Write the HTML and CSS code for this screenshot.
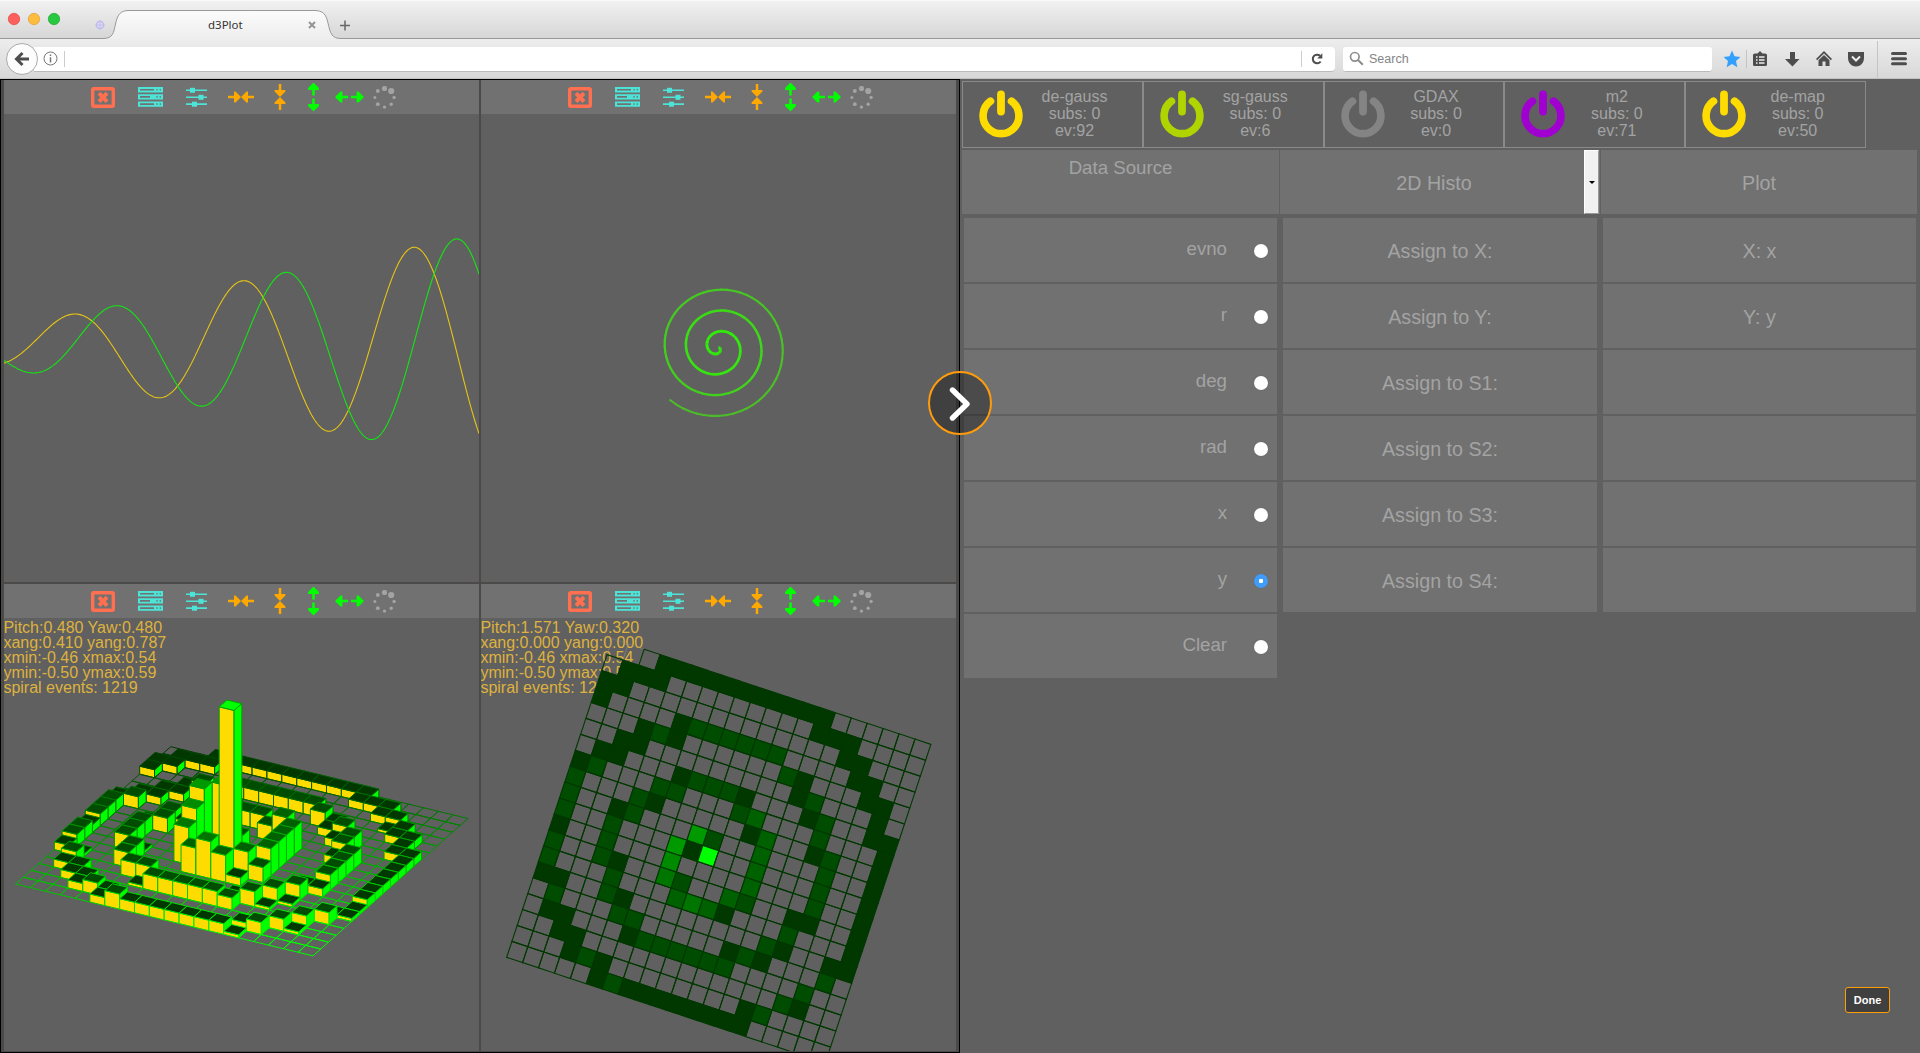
FILE: index.html
```html
<!DOCTYPE html>
<html lang="en">
<head>
<meta charset="utf-8">
<title>d3Plot</title>
<link rel="stylesheet" href="styles.css">
</head>
<body>
<svg class="defs" width="0" height="0">
  <symbol id="i-close" viewBox="0 0 24 21"><rect x="1.7" y="1.7" width="20.6" height="17.6" rx="1" fill="none" stroke="#ff6f50" stroke-width="3.4"/><path d="M8 6.200l8 8.400M16 6.200l-8 8.400" stroke="#ff6f50" stroke-width="4"/></symbol>
  <symbol id="i-list" viewBox="0 0 25 20"><g fill="#4de4d8"><path d="M0 0h25v5.400H0zM0 7.200h25v5.400H0zM0 14.400h25v5.400H0z"/></g><g fill="#717171"><path d="M2 1.900h14v1.600H2zM2 9.100h10v1.600H2zM2 16.300h14v1.600H2z"/><circle cx="19" cy="2.700" r=".8"/><circle cx="22.300" cy="2.700" r=".8"/><circle cx="19" cy="9.900" r=".8"/><circle cx="22.300" cy="9.900" r=".8"/><circle cx="19" cy="17.100" r=".8"/><circle cx="22.300" cy="17.100" r=".8"/></g></symbol>
  <symbol id="i-sliders" viewBox="0 0 21 20"><g fill="#4de4d8"><path d="M0 2.500h21v1.600H0zM0 9.500h21v1.600H0zM0 16.300h21v1.600H0z"/><rect x="4" y=".8" width="5" height="5"/><rect x="12.500" y="7.800" width="5" height="5"/><rect x="6" y="14.700" width="5" height="5"/></g></symbol>
  <symbol id="i-in" viewBox="0 0 26 12"><g fill="none" stroke-width="2.500"><path d="M0 6h11M26 6H15"/></g><path d="M6 .6h1.500L13 6 7.500 11.400H6V.6zM20 .6h-1.500L13 6l5.500 5.400H20z" stroke="none" fill="currentColor"/></symbol>
  <symbol id="i-out" viewBox="0 0 29 12"><path d="M4 6h9M16 6h9" stroke-width="2.600"/><path d="M0 6L5.500.6h1.900v10.800H5.500zM29 6L23.500.6h-1.900v10.800h1.900z" stroke="none" fill="currentColor"/></symbol>
  <symbol id="i-spin" viewBox="-11.500 -11.500 23 23"><g fill="#a3a3a3"><circle cx="0" cy="-9" r="2.600"/><circle cx="6.700" cy="-6.500" r="3.100"/><circle cx="9.600" cy="0" r="1.700"/><circle cx="6.700" cy="6.700" r="1.700"/><circle cx="0" cy="9.600" r="1.700"/><circle cx="-6.700" cy="6.700" r="1.900"/><circle cx="-9.600" cy="0" r="1.500"/><circle cx="-6.700" cy="-6.500" r="2"/></g></symbol>
  <symbol id="i-power" viewBox="0 0 44 48"><g fill="none" stroke="currentColor" stroke-linecap="round"><path d="M11.500 11.200A17.900 17.900 0 1 0 32.500 11.200" stroke-width="7.600"/><path d="M22 4.500v17" stroke-width="7.800"/></g></symbol>
</svg>

<header class="chrome">
  <div class="tabstrip">
    <svg class="tabshape" width="1920" height="40" viewBox="0 0 1920 40">
      <defs><linearGradient id="tg" x1="0" y1="0" x2="0" y2="1"><stop offset="0" stop-color="#fbfbfb"/><stop offset="1" stop-color="#ededed"/></linearGradient></defs>
      <path d="M0 38.500H103C113 38.500 113.500 33 115.500 24 117.500 15 120 10.500 129 10.500H314C323 10.500 326 14 328 23 330.500 34 332 38.500 341 38.500H1920V41H0z" fill="url(#tg)" stroke="#999"/>
      <circle cx="14" cy="19" r="5.700" fill="#fc605c" stroke="#df4744" stroke-width=".7"/><circle cx="34" cy="19" r="5.700" fill="#fdbc40" stroke="#de9f34" stroke-width=".7"/><circle cx="54" cy="19" r="5.700" fill="#28c840" stroke="#24a82f" stroke-width=".7"/>
      <circle cx="100" cy="25" r="3.600" fill="none" stroke="#c0bcf3" stroke-width="1.600"/><path d="M100 20.500v9M95.500 25h9" stroke="#c0bcf3"/>
      <path d="M309 22l6 6M315 22l-6 6" stroke="#949494" stroke-width="2"/>
      <path d="M345 20.500v10M340 25.500h10" stroke="#666" stroke-width="1.500"/>
    </svg>
    <span class="tabname">d3Plot</span>
  </div>
  <nav class="navbar">
    <div class="back"><svg width="16" height="16" viewBox="0 0 16 16"><path d="M15 8H4M8.500 2L2.500 8l6 6" fill="none" stroke="#4d4d4d" stroke-width="3"/></svg></div>
    <div class="url">
      <svg width="15" height="15" viewBox="0 0 15 15"><circle cx="7.500" cy="7.500" r="6.500" fill="none" stroke="#777"/><path d="M7.500 6.200v5.200M7.500 3.500v1.600" stroke="#777" stroke-width="1.500"/></svg>
      <i class="sep"></i><span class="grow"></span><i class="sep"></i>
      <svg class="reload" width="12" height="12" viewBox="0 0 12 12"><path d="M9.600 8.500A4.300 4.300 0 1 1 9 2.800" fill="none" stroke="#4d4d4d" stroke-width="2"/><path d="M11.300.3v5.200H6.200z" fill="#4d4d4d"/></svg>
    </div>
    <div class="search"><svg width="15" height="15" viewBox="0 0 15 15"><circle cx="5.800" cy="5.800" r="4.300" fill="none" stroke="#8d8d8d" stroke-width="1.700"/><path d="M9 9l4.800 4.800" stroke="#8d8d8d" stroke-width="2"/></svg><span>Search</span></div>
    <svg class="tools" width="200" height="40" viewBox="1716 39 200 40">
      <path d="M1732 50.500l2.500 5.700 6 .7-4.500 4.100 1.300 6.300-5.300-3.200-5.300 3.200 1.300-6.300-4.500-4.100 6-.7z" fill="#33a0ff"/>
      <path d="M1746.500 50v18M1877.500 41v37" stroke="#c4c4c4"/>
      <g fill="#4d4d4d"><path d="M1755 53.500h2.500l2.500-2.500 2.500 2.500h2.500q2 0 2 1.500v9.500q0 1.500-1.500 1.500h-11q-1.500 0-1.500-1.500V55q0-1.500 2-1.500z"/><path d="M1790 52h5v7h4.500l-7 7.500-7.500-7.500h5z"/><path d="M1824 51l8 8-1.200 1.200-6.800-6.800-6.800 6.800L1816 59z"/><path d="M1818.500 60.300l5.500-5.400 5.500 5.400V66h-4v-4.500h-3V66h-4z"/><path d="M1848 52h16v6c0 5-4 8.500-8 8.500s-8-3.500-8-8.500z"/></g>
      <path d="M1756 57h1.500m1.500 0h5.500m-8.500 3h1.500m1.500 0h5.500m-8.500 3h1.500m1.500 0h5.500" stroke="#eee" stroke-width="1.300"/>
      <path d="M1852 56.500l4 4 4-4" fill="none" stroke="#eee" stroke-width="2"/>
      <path d="M1892.500 53.500h13M1892.500 58.700h13M1892.500 63.800h13" stroke="#4d4d4d" stroke-width="3" stroke-linecap="round"/>
    </svg>
  </nav>
</header>

<main class="app">
  <section class="plots">
    <article class="panel"><div class="bar"></div><svg class="plot" id="waves"></svg></article>
    <article class="panel"><div class="bar"></div><svg class="plot" id="spiral"></svg></article>
    <article class="panel"><div class="bar"></div><svg class="plot" id="bars3d"><text x="-.6" y="15.300">Pitch:0.480 Yaw:0.480</text><text x="-.6" y="30.300">xang:0.410 yang:0.787</text><text x="-.6" y="45.300">xmin:-0.46 xmax:0.54</text><text x="-.6" y="60.300">ymin:-0.50 ymax:0.59</text><text x="-.6" y="75.300">spiral events: 1219</text></svg></article>
    <article class="panel"><div class="bar"></div><svg class="plot" id="heat"><text x="-.6" y="15.300">Pitch:1.571 Yaw:0.320</text><text x="-.6" y="30.300">xang:0.000 yang:0.000</text><text x="-.6" y="45.300">xmin:-0.46 xmax:0.54</text><text x="-.6" y="60.300">ymin:-0.50 ymax:0.59</text><text x="-.6" y="75.300">spiral events: 1219</text></svg></article>
  </section>

  <section class="config">
    <div class="sources">
      <div class="source"><svg class="power yellow"><use href="#i-power"/></svg><p>de-gauss<br>subs: 0<br>ev:92</p></div>
      <div class="source"><svg class="power lime"><use href="#i-power"/></svg><p>sg-gauss<br>subs: 0<br>ev:6</p></div>
      <div class="source"><svg class="power gray"><use href="#i-power"/></svg><p>GDAX<br>subs: 0<br>ev:0</p></div>
      <div class="source"><svg class="power purple"><use href="#i-power"/></svg><p>m2<br>subs: 0<br>ev:71</p></div>
      <div class="source"><svg class="power yellow"><use href="#i-power"/></svg><p>de-map<br>subs: 0<br>ev:50</p></div>
    </div>
    <div class="heads">
      <div class="head first">Data Source</div>
      <div class="head kind"><span>2D Histo</span><b class="drop"></b></div>
      <div class="head">Plot</div>
    </div>
    <div class="columns">
      <div class="col fields">
        <label class="cell"><span>evno</span><i class="radio"></i></label>
        <label class="cell"><span>r</span><i class="radio"></i></label>
        <label class="cell"><span>deg</span><i class="radio"></i></label>
        <label class="cell"><span>rad</span><i class="radio"></i></label>
        <label class="cell"><span>x</span><i class="radio"></i></label>
        <label class="cell"><span>y</span><i class="radio on"></i></label>
        <label class="cell"><span>Clear</span><i class="radio"></i></label>
      </div>
      <div class="col">
        <div class="cell">Assign to X:</div><div class="cell">Assign to Y:</div><div class="cell">Assign to S1:</div><div class="cell">Assign to S2:</div><div class="cell">Assign to S3:</div><div class="cell">Assign to S4:</div>
      </div>
      <div class="col last">
        <div class="cell">X: x</div><div class="cell">Y: y</div><div class="cell"></div><div class="cell"></div><div class="cell"></div><div class="cell"></div>
      </div>
    </div>
    <button class="done">Done</button>
  </section>
  <div class="toggle"><svg width="64" height="64" viewBox="0 0 64 64"><path d="M24.500 19l14.500 14L24.500 47" fill="none" stroke="#fff" stroke-width="5.400" stroke-linecap="round" stroke-linejoin="round"/></svg></div>
</main>
<script src="plots.js"></script>
</body>
</html>
```
FILE: styles.css
```css
* { box-sizing: border-box; }
body { margin: 0; width: 1920px; height: 1053px; overflow: hidden; background: #606060; font-family: "Liberation Sans", Arial, sans-serif; color: #a3a3a3; }
svg { display: block; flex: none; }
.defs { position: absolute; }

.chrome { height: 79px; background: #d9d9d9; }
.tabstrip { position: relative; height: 39px; background: linear-gradient(#f1f1f1, #d6d6d6); border-top: 1px solid #fafafa; }
.tabshape { position: absolute; left: 0; top: -1px; }
.tabname { position: absolute; left: 208px; top: 17px; font: 11.5px/14px "Noto Sans", sans-serif; color: #333; }
.navbar { position: relative; height: 40px; display: flex; align-items: center; padding: 1px 0 0 6px; background: linear-gradient(#ededed, #d8d8d8); border-bottom: 1px solid #c3c3c3; }
.back { width: 32px; height: 32px; border-radius: 50%; border: 1px solid #aaa; background: #fcfcfc; display: flex; align-items: center; justify-content: center; z-index: 1; }
.url { width: 1301px; height: 25px; margin-left: -4px; background: #fff; border-bottom: 1px solid #bbb; border-radius: 0 4px 4px 0; display: flex; align-items: center; padding-left: 9px; }
.sep { width: 1px; height: 16px; margin-left: 6px; background: #ccc; }
.grow { flex: 1; }
.reload { margin: 0 12px 0 9px; }
.search { width: 369px; height: 25px; margin-left: 8px; background: #fff; border-bottom: 1px solid #bbb; border-radius: 3px; display: flex; align-items: center; padding-left: 6px; gap: 5px; font-size: 12.500px; color: #858585; }
.tools { margin-left: 4px; }

.app { position: relative; height: 974px; display: flex; }
.plots { width: 960px; height: 974px; display: grid; grid-template-columns: 475px 475px; grid-template-rows: 502px 467px; gap: 2px; padding: 0 3px; border: 1px solid #000; background: #4c4949; }
.panel { display: flex; flex-direction: column; min-height: 0; background: #606060; overflow: hidden; }
.bar { height: 34px; flex: none; display: flex; align-items: center; background: #717171; }
.orange { color: #ffa800; stroke: #ffa800; }
.green { color: #00ff00; stroke: #00ff00; }
.up { transform: rotate(90deg); }
.plot { width: 475px; flex: 1; min-height: 0; overflow: hidden; }
.plot text { font-size: 16px; fill: #deb23e; }

.config { width: 960px; padding: 2px 1px 0 2px; }
.sources { display: flex; height: 67px; }
.source { width: 180.800px; height: 67px; border: 1px solid #8a8a8a; display: flex; align-items: center; padding-left: 16px; }
.source p { margin: 0 0 2px 1px; width: 101px; text-align: center; font-size: 16px; line-height: 17px; }
.power { width: 44px; height: 48px; margin: 0 0 2px; }
.yellow { color: #ffdc00; } .lime { color: #b0d400; } .gray { color: #848484; } .purple { color: #a000d0; }
.heads { display: grid; grid-template-columns: 317px 320px 316px; gap: 1px; height: 64px; margin-top: 2px; font-size: 19.700px; }
.head { background: #717171; display: flex; align-items: center; justify-content: center; padding-top: 2px; }
.first { align-items: flex-start; padding-top: 7px; font-size: 18.670px; }
.kind { justify-content: stretch; padding-top: 0; }
.kind span { flex: 1; text-align: center; padding: 2px 0 0 4px; }
.drop { width: 15px; height: 64px; margin-right: 1px; background: #f1f1f1; border: 1px solid #fff; border-right-color: #999; border-bottom-color: #999; display: flex; align-items: center; justify-content: center; }
.drop::after { content: ""; border: 3px solid transparent; border-top: 3px solid #000; border-bottom: 0; }
.columns { display: flex; align-items: flex-start; gap: 6px; padding: 4px 2px 0; }
.col { width: 314px; display: grid; gap: 2px; font-size: 19.700px; }
.last { width: 313px; }
.fields { width: 313px; font-size: 18.670px; }
.cell { height: 64px; background: #717171; display: flex; align-items: center; justify-content: center; padding-top: 2px; }
.fields .cell { justify-content: flex-end; padding: 0 9px 0 0; gap: 27px; }
.fields .cell span { padding-bottom: 3px; }
.radio { width: 14px; height: 14px; border-radius: 50%; background: #fff; margin-top: 1px; box-shadow: 0 0 1px #555; }
.radio.on { background: radial-gradient(circle, #fff 0 2px, #3f9cf8 2.500px); }
.done { display: block; width: 45px; height: 26px; margin: 309px 0 0 883px; padding: 0; border: 1.500px solid #ff9c0a; border-radius: 3px; background: #404040; color: #fff; font: bold 11px "Liberation Sans", sans-serif; }
.toggle { position: absolute; left: 928px; top: 292px; width: 64px; height: 64px; border-radius: 50%; border: 2px solid #ff9c0a; background: rgba(0,0,0,.33); }
.toggle svg { margin: -2px; }
```
FILE: plots.js
```js
const NS = 'http://www.w3.org/2000/svg';
function el(parent, tag, attrs) {
  const n = document.createElementNS(NS, tag);
  for (const k in attrs) n.setAttribute(k, attrs[k]);
  parent.appendChild(n);
  return n;
}

// Toolbar: symbol, width, height, gap before, class
const tools = [
  ['i-close', 24, 21, 87, ''], ['i-list', 25, 20, 23, ''], ['i-sliders', 21, 20, 23, ''],
  ['i-in', 26, 12, 21, 'orange'], ['i-in', 26, 12, 12.500, 'orange up'],
  ['i-out', 29, 12, 6.500, 'green up'], ['i-out', 29, 12, 6.500, 'green'], ['i-spin', 23, 23, 9.500, '']
];
document.querySelectorAll('.bar').forEach(bar => {
  for (const [id, w, h, gap, cls] of tools) {
    const s = el(bar, 'svg', { width: w, height: h, class: cls, style: 'margin-left:' + gap + 'px' });
    el(s, 'use', { href: '#' + id });
  }
});

// Growing sine waves
const waves = document.getElementById('waves');
for (const [phase, color] of [[66.8, '#e6c414'], [109.5, '#12e612']]) {
  let d = '';
  for (let x = 0; x <= 475; x++) {
    const a = 34 + (x - 71) * 0.196;
    d += (x ? 'L' : 'M') + x + ' ' + (233.6 - a * Math.cos(2 * Math.PI * (x - phase) / 171)).toFixed(2);
  }
  el(waves, 'path', { d, fill: 'none', stroke: color, 'stroke-width': 1.1 });
}

// Spiral that fades and thins outward
const spiral = document.getElementById('spiral');
const at = t => {
  const a = 2 * Math.PI * t - 0.12;
  return (237.4 + 21.3 * t * Math.cos(a)).toFixed(2) + ' ' + (233.6 + 20.9 * t * Math.sin(a)).toFixed(2);
};
for (let i = 0; i < 200; i++) {
  const k = i / 200, m = (u, v) => Math.round(u + (v - u) * k);
  el(spiral, 'path', {
    d: 'M' + at(3.385 * i / 200) + 'L' + at(3.385 * (i + 1.15) / 200),
    stroke: `rgb(${m(40, 78)},${m(255, 186)},${m(0, 42)})`, 'stroke-width': 3 - 1 * k
  });
}

// Histogram bins: 0 is empty, other codes select colour and height
const bins = [
  '00011111111111000000',
  '01110000000001110000',
  '11000000000000011000',
  '100001bbbbbb0000a100',
  '00012100000021000110',
  '00110000000001200010',
  '01100012221000120011',
  '1b000220002300020001',
  'b0002100000130012001',
  'b0012000620030002001',
  'b0020006190030002001',
  '10020005000030002001',
  'b002a004200320011001',
  'b000200034310002000a',
  '1a002a000000002a00aa',
  '0b000220000012a000b0',
  '011000a22222b0000b00',
  '0011000000000000ba00',
  '0001b1000000001b0000',
  '00000121111111a00000'
];
const color = { a: '#003800', 1: '#003800', b: '#004c00', 2: '#004c00', 3: '#006100', 4: '#007500', 5: '#008a00', 6: '#009900', 9: '#00ff00' };
const height = { a: 3, 1: 8, b: 12, 2: 15, 3: 27, 4: 37, 5: 49, 6: 62, 9: 147.7 };

function project(o, u, v) {
  return (r, c, h = 0) => (o[0] + u[0] * c + v[0] * r).toFixed(2) + ',' + (o[1] + u[1] * c + v[1] * r - h).toFixed(2);
}

const heat = document.getElementById('heat');
const q = project([131.3, 20.7], [15.93, 5.283], [-5.283, 15.93]);
bins.forEach((row, r) => [...row].forEach((b, c) => {
  const hidden = r === 0 && c < 2;
  el(heat, 'polygon', {
    points: [q(r, c), q(r, c + 1), q(r + 1, c + 1), q(r + 1, c)].join(' '),
    fill: color[b] || 'none', stroke: hidden ? '#8a8a8a' : '#003800', 'stroke-width': hidden ? 0.4 : 1.1
  });
}));

const bars = document.getElementById('bars3d');
const p = project([166.7, 128.7], [14.87, 3.59], [-7.757, 6.867]);
bins.forEach((row, r) => [...row].forEach((b, c) => {
  const depth = Math.min(1, (r * 6.867 + c * 3.59) / 190);
  const stroke = `rgb(0,${Math.round(54 + 200 * depth)},0)`;
  // Bars on the outer ring vary slightly in height
  const h = (height[b] || 0) + (r === 19 && b === '1' && c > 6 ? 2.5 : 0);
  const face = (pts, fill) => el(bars, 'polygon', { points: pts.join(' '), fill, stroke, 'stroke-width': 1, 'stroke-linejoin': 'round' });
  if (h) {
    face([p(r + 1, c), p(r + 1, c + 1), p(r + 1, c + 1, h), p(r + 1, c, h)], '#ffdc00');
    face([p(r, c + 1), p(r + 1, c + 1), p(r + 1, c + 1, h), p(r, c + 1, h)], '#00ff00');
  }
  face([p(r, c, h), p(r, c + 1, h), p(r + 1, c + 1, h), p(r + 1, c, h)], color[b] || 'none');
}));
```
